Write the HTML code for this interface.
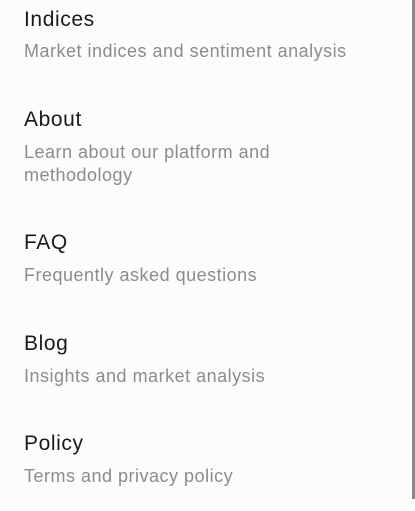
<!DOCTYPE html>
<html><head><meta charset="utf-8"><style>
html,body{margin:0;padding:0;width:415px;height:511px;overflow:hidden;background:#fcfcfc;font-family:"Liberation Sans",sans-serif;}
.t{position:absolute;left:24px;font-size:21px;line-height:24px;color:#1a1a1a;letter-spacing:0.6px;}
.d{position:absolute;left:24px;font-size:18px;line-height:23px;color:#8c8c8c;width:300px;letter-spacing:0.5px;}
.sb{position:absolute;left:412px;top:0;width:3px;height:499px;background:#8a8a8a;}
</style></head><body>
<div class="t" style="top:8px">Indices</div>
<div class="d" style="top:40px;width:385px">Market indices and sentiment analysis</div>
<div class="t" style="top:108px">About</div>
<div class="d" style="top:141px;width:300px">Learn about our platform and methodology</div>
<div class="t" style="top:231px">FAQ</div>
<div class="d" style="top:264px">Frequently asked questions</div>
<div class="t" style="top:332px">Blog</div>
<div class="d" style="top:365px">Insights and market analysis</div>
<div class="t" style="top:432px">Policy</div>
<div class="d" style="top:465px">Terms and privacy policy</div>
<div class="sb"></div>
</body></html>
